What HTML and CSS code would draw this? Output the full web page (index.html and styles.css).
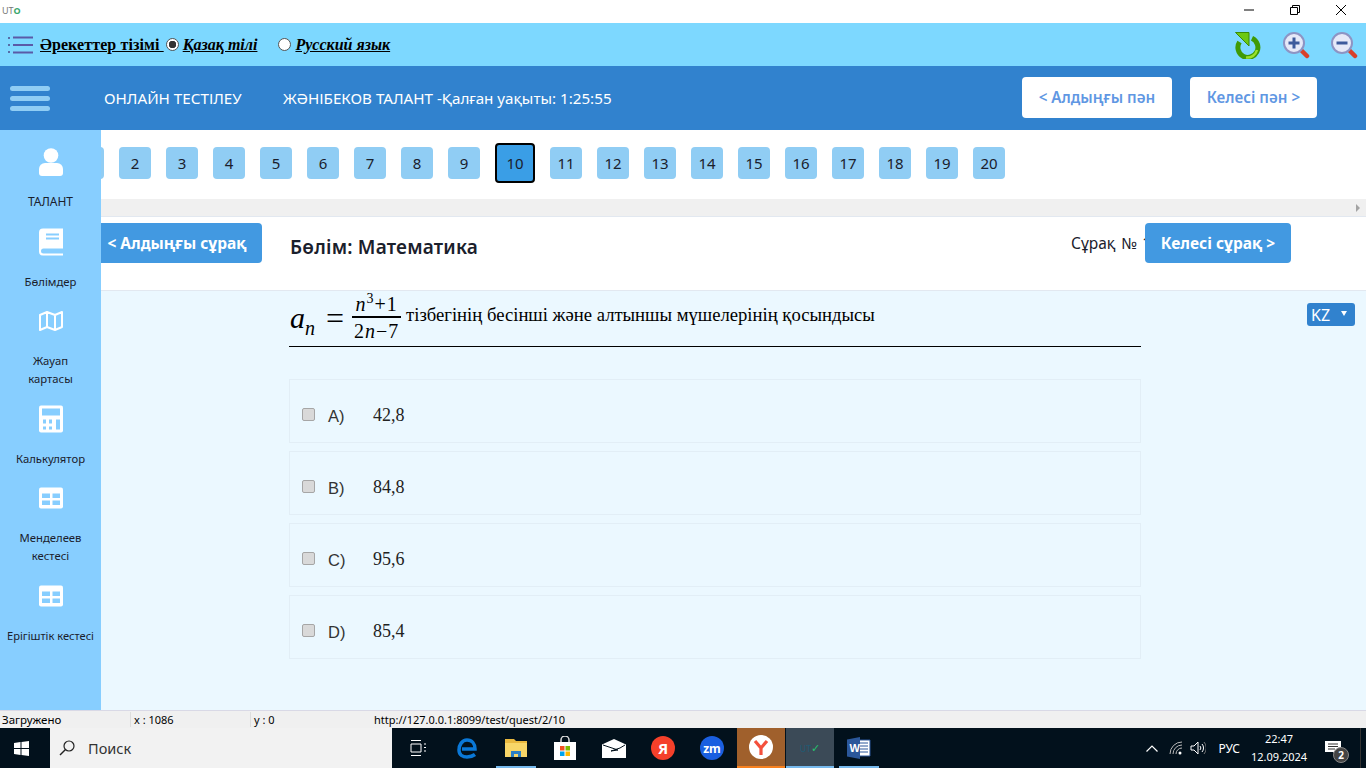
FILE: index.html
```html
<!DOCTYPE html>
<html lang="kk">
<head>
  <meta charset="UTF-8" />
  <meta name="viewport" content="width=device-width, initial-scale=1.0"/>
  <title>Онлайн тестілеу</title>
  <link rel="stylesheet" href="styles.css">
</head>
<body>

  <!-- window title bar -->
  <div class="titlebar">
    <span class="app-logo">UT<span class="app-logo-o">O</span></span>
    <div class="win-controls">
      <svg class="win-btn" viewBox="0 0 12 12"><path d="M1 6h10" stroke="#000" fill="none"/></svg>
      <svg class="win-btn" viewBox="0 0 12 12"><path d="M1.5 3.5h7v7h-7zM3.5 3.5v-2h7v7h-2" stroke="#000" fill="none"/></svg>
      <svg class="win-btn" viewBox="0 0 12 12"><path d="M1 1l10 10M11 1L1 11" stroke="#000" fill="none"/></svg>
    </div>
  </div>

  <!-- toolbar -->
  <div class="toolbar">
    <svg class="list-icon" viewBox="0 0 26 18">
      <path d="M1 2h2M1 9h2M1 16h2" stroke="#4a4a8a" stroke-width="1.5"/>
      <path d="M6 1.5h20M6 9h20M6 16.5h20" stroke="#5a5aa8" stroke-width="2"/>
    </svg>
    <a class="tool-link tool-title">Әрекеттер тізімі&nbsp;</a>
    <span class="radio radio-on"></span>
    <a class="tool-link tool-lang lang-kz">Қазақ тілі</a>
    <span class="radio"></span>
    <a class="tool-link tool-lang">Русский язык</a>

    <div class="tool-icons">
      <svg class="tool-icon" viewBox="0 0 28 28">
        <path d="M18 7.300A10 10 0 1 1 5.500 11" fill="none" stroke="#3f9a05" stroke-width="5"/>
        <path d="M23 19a10 10 0 0 1-11 7.500" fill="none" stroke="#9be02c" stroke-width="2.500"/>
        <path d="M1.500 1.500H15V15z" fill="#6cc814" stroke="#3a8c06"/>
      </svg>
      <svg class="tool-icon" viewBox="0 0 28 28">
        <path d="M18 18l7 7" stroke="#d8402a" stroke-width="4.500" stroke-linecap="round"/>
        <circle cx="12" cy="12" r="10" fill="#e6e9f8" stroke="#8d94c4" stroke-width="2"/>
        <path d="M6.500 12h11M12 6.500v11" stroke="#3d5a9c" stroke-width="3"/>
      </svg>
      <svg class="tool-icon" viewBox="0 0 28 28">
        <path d="M18 18l7 7" stroke="#d8402a" stroke-width="4.500" stroke-linecap="round"/>
        <circle cx="12" cy="12" r="10" fill="#e6e9f8" stroke="#8d94c4" stroke-width="2"/>
        <path d="M6.500 12h11" stroke="#3d5a9c" stroke-width="3"/>
      </svg>
    </div>
  </div>

  <!-- blue header -->
  <header class="header">
    <div class="burger"><span></span><span></span><span></span></div>
    <span class="header-title">ОНЛАЙН ТЕСТІЛЕУ</span>
    <span class="header-user">ЖӘНІБЕКОВ ТАЛАНТ -Қалған уақыты: 1:25:55</span>
    <button class="subject-btn subject-prev">&lt; Алдыңғы пән</button>
    <button class="subject-btn subject-next">Келесі пән &gt;</button>
  </header>

  <div class="body-row">
    <aside class="sidebar">
      <div class="side-item">
        <svg class="side-icon" viewBox="0 0 24 28"><circle cx="12" cy="7.500" r="7.300" fill="#fff"/><path d="M0 25v-4a6 6 0 0 1 6-6h12a6 6 0 0 1 6 6v4a3 3 0 0 1-3 3H3a3 3 0 0 1-3-3z" fill="#fff"/></svg>
        <span class="side-label side-upper">ТАЛАНТ</span>
      </div>
      <div class="side-item">
        <svg class="side-icon" viewBox="0 0 24 27"><path d="M4 0h20v20H4.500a2.500 2.500 0 0 0 0 5H24v2H4a4 4 0 0 1-4-4V4a4 4 0 0 1 4-4z" fill="#fff"/><path d="M7 6h13M7 10h13" stroke="#87ceff" stroke-width="2"/></svg>
        <span class="side-label">Бөлімдер</span>
      </div>
      <div class="side-item">
        <svg class="side-icon" viewBox="0 0 24 20"><path d="M1 4l7-3 8 3 7-3v15l-7 3-8-3-7 3zM8 1v15M16 4v15" fill="none" stroke="#fff" stroke-width="2" stroke-linejoin="round"/></svg>
        <span class="side-label">Жауап картасы</span>
      </div>
      <div class="side-item">
        <svg class="side-icon" viewBox="0 0 24 27"><rect width="24" height="27" rx="2" fill="#fff"/><path d="M3 3h18v7H3zM4 14h3v4H4zM10 14h3v4h-3zM4 21h3v3H4zM10 21h3v3h-3zM17 14h4v10h-4z" fill="#87ceff"/></svg>
        <span class="side-label">Калькулятор</span>
      </div>
      <div class="side-item">
        <svg class="side-icon" viewBox="0 0 24 21"><rect width="24" height="21" rx="2" fill="#fff"/><path d="M3 6h8v4.500H3zM13.500 6H21v4.500h-7.500zM3 13h8v4.500H3zM13.500 13H21v4.500h-7.500z" fill="#87ceff"/></svg>
        <span class="side-label">Менделеев кестесі</span>
      </div>
      <div class="side-item">
        <svg class="side-icon" viewBox="0 0 24 21"><rect width="24" height="21" rx="2" fill="#fff"/><path d="M3 6h8v4.500H3zM13.500 6H21v4.500h-7.500zM3 13h8v4.500H3zM13.500 13H21v4.500h-7.500z" fill="#87ceff"/></svg>
        <span class="side-label side-wide">Ерігіштік кестесі</span>
      </div>
    </aside>

    <main class="main">
      <div class="pages">
        <a class="page">1</a>
        <a class="page">2</a>
        <a class="page">3</a>
        <a class="page">4</a>
        <a class="page">5</a>
        <a class="page">6</a>
        <a class="page">7</a>
        <a class="page">8</a>
        <a class="page">9</a>
        <a class="page page-active">10</a>
        <a class="page">11</a>
        <a class="page">12</a>
        <a class="page">13</a>
        <a class="page">14</a>
        <a class="page">15</a>
        <a class="page">16</a>
        <a class="page">17</a>
        <a class="page">18</a>
        <a class="page">19</a>
        <a class="page">20</a>
      </div>
      <div class="hscroll"><span class="hscroll-arrow"></span></div>

      <div class="quest-head">
        <button class="quest-btn quest-prev">&lt; Алдыңғы сұрақ</button>
        <span class="section-name">Бөлім: Математика</span>
        <span class="quest-no">Сұрақ № 10</span>
        <button class="quest-btn quest-next">Келесі сұрақ &gt;</button>
      </div>

      <div class="quest-body">
        <div class="quest-col">
          <div class="quest-text">
            <span class="formula">
              <i class="f-a">a<sub>n</sub></i>
              <span class="f-eq">=</span>
              <span class="frac">
                <span class="frac-top"><i>n</i><sup>3</sup>+1</span>
                <span class="frac-bot">2<i>n</i>−7</span>
              </span>
            </span>
            <span class="quest-words">тізбегінің бесінші және алтыншы мүшелерінің қосындысы</span>
          </div>

          <label class="option"><input type="checkbox"><span class="opt-key">A)</span><span class="opt-val">42,8</span></label>
          <label class="option"><input type="checkbox"><span class="opt-key">B)</span><span class="opt-val">84,8</span></label>
          <label class="option"><input type="checkbox"><span class="opt-key">C)</span><span class="opt-val">95,6</span></label>
          <label class="option"><input type="checkbox"><span class="opt-key">D)</span><span class="opt-val">85,4</span></label>
        </div>
        <div class="lang-select">KZ<span class="lang-caret"></span></div>
      </div>
    </main>
  </div>

  <!-- status bar -->
  <div class="statusbar">
    <span class="st-cell st-state">Загружено</span>
    <span class="st-cell st-x">x : 1086</span>
    <span class="st-cell st-y">y : 0</span>
    <span class="st-cell st-url">http://127.0.0.1:8099/test/quest/2/10</span>
  </div>

  <!-- windows taskbar -->
  <div class="taskbar">
    <div class="start">
      <svg width="15" height="15" viewBox="0 0 15 15"><path d="M0 2l6.500-1v6H0zM7.500 1L15 0v7H7.500zM0 8h6.500v6L0 13zM7.500 8H15v7l-7.500-1z" fill="#fff"/></svg>
    </div>
    <div class="search">
      <svg width="16" height="16" viewBox="0 0 16 16"><circle cx="10" cy="6" r="5" fill="none" stroke="#222" stroke-width="1.200"/><path d="M6.500 9.500L1 15" stroke="#222" stroke-width="1.400"/></svg>
      <span>Поиск</span>
    </div>
    <div class="apps">
      <div class="app">
        <svg width="16" height="16" viewBox="0 0 16 16"><path d="M1 .5h10M1 15.500h10M1 4h10v8H1zM14 4h2M14 7.500h2M14 11h2" fill="none" stroke="#fff"/></svg>
      </div>
      <div class="app">
        <svg width="22" height="22" viewBox="0 0 22 22"><path d="M6 12h13c0-5-3-9-8-9-5 0-8 5-8 10 0 5 4 7 8 7 3 0 6-1 8-2.500" fill="none" stroke="#0a78d7" stroke-width="3.500"/></svg>
      </div>
      <div class="app app-open">
        <svg width="24" height="20" viewBox="0 0 24 20"><path d="M1 1h9l2 2h11v16H1z" fill="#eab93f"/><path d="M1 5h22v14H1z" fill="#f8d668"/><path d="M7 19v-6h10v6h-3v-3h-4v3z" fill="#2b7fc4"/></svg>
      </div>
      <div class="app">
        <svg width="22" height="24" viewBox="0 0 22 24"><path d="M7 7V4a4 4 0 0 1 8 0v3" fill="none" stroke="#ddd" stroke-width="1.500"/><path d="M0 6h22v18H0z" fill="#fff"/><path d="M6 10h4.500v4.500H6z" fill="#f25022"/><path d="M11.500 10H16v4.500h-4.500z" fill="#7fba00"/><path d="M6 15.500h4.500V20H6z" fill="#00a4ef"/><path d="M11.500 15.500H16V20h-4.500z" fill="#ffb900"/></svg>
      </div>
      <div class="app">
        <svg width="24" height="19" viewBox="0 0 24 19"><path d="M0 5.500L12 0l12 5.500V19H0z" fill="#fff"/><path d="M1 6l15 5-7 1 9-3 5-3" fill="none" stroke="#02111c"/></svg>
      </div>
      <div class="app"><span class="round-app ya">Я</span></div>
      <div class="app"><span class="round-app zm">zm</span></div>
      <div class="app app-browser">
        <svg width="24" height="24" viewBox="0 0 24 24"><circle cx="12" cy="12" r="12" fill="#fff"/><path d="M6 6l6 7 6-7M12 13v7" fill="none" stroke="#f4503c" stroke-width="3.200"/></svg>
      </div>
      <div class="app app-uto">
        <span class="uto-mark">UT<span class="uto-check">✓</span></span>
      </div>
      <div class="app app-open">
        <svg width="24" height="22" viewBox="0 0 24 22"><path d="M10 3h13v16H10z" fill="#fff" stroke="#2b579a"/><path d="M13 6h8M13 9h8M13 12h8M13 15h8" stroke="#2b579a"/><path d="M0 2.500L13 0v22L0 19.500z" fill="#2b579a"/><text x="2.500" y="15" class="word-w">W</text></svg>
      </div>
    </div>

    <div class="tray">
      <svg class="tray-chevron" width="12" height="7" viewBox="0 0 12 7"><path d="M.5 6.500L6 1l5.500 5.500" fill="none" stroke="#fff" stroke-width="1.200"/></svg>
      <svg class="tray-wifi" width="14" height="14" viewBox="0 0 14 14"><path d="M1 13A12 12 0 0 1 13 1M4 13a9 9 0 0 1 9-9M7 13a6 6 0 0 1 6-6" fill="none" stroke="#bbb"/><circle cx="11" cy="12" r="1.500" fill="#fff"/></svg>
      <svg class="tray-sound" width="16" height="14" viewBox="0 0 16 14"><path d="M1 5h3l4-4v12l-4-4H1z" fill="none" stroke="#fff"/><path d="M10 5a3 3 0 0 1 0 4M12 3a6 6 0 0 1 0 8" fill="none" stroke="#fff"/><path d="M14 1a9 9 0 0 1 0 12" fill="none" stroke="#777"/></svg>
      <span class="tray-lang">РУС</span>
      <span class="tray-clock">22:47<br>12.09.2024</span>
      <span class="tray-note">
        <svg width="16" height="15" viewBox="0 0 16 15"><path d="M0 0h16v11h-3l-1 4-4-4H0z" fill="#fff"/><path d="M3 3h10M3 5.500h10M3 8h7" stroke="#333"/></svg>
        <span class="note-badge">2</span>
      </span>
    </div>
  </div>

</body>
</html>
```

FILE: styles.css
```css
* {
  margin: 0;
  padding: 0;
  box-sizing: border-box;
}

html, body {
  height: 100%;
  overflow: hidden;
}

body {
  display: flex;
  flex-direction: column;
  font-family: "Noto Sans", sans-serif;
  color: #1a202c;
  background-color: #fff;
}

/* title bar */
.titlebar {
  height: 23px;
  display: flex;
  align-items: center;
  justify-content: space-between;
  padding-bottom: 3px;
  background-color: #fff;
}

.app-logo {
  margin-left: 2px;
  font-size: 9px;
  color: #777;
}

.app-logo-o {
  color: #3aa76d;
  font-weight: 700;
}

.win-controls {
  display: flex;
  margin-right: 19px;
  gap: 34px;
}

.win-btn {
  width: 12px;
  height: 12px;
}

/* toolbar */
.toolbar {
  height: 43px;
  display: flex;
  align-items: center;
  padding-left: 7px;
  background-color: #7dd8ff;
}

.list-icon {
  width: 26px;
  height: 18px;
  margin-right: 7px;
}

.tool-link {
  font-family: "Liberation Serif", serif;
  font-size: 16px;
  font-weight: 700;
  color: #000;
  text-decoration: underline;
}

.tool-lang {
  font-style: italic;
}

.lang-kz {
  margin-right: 21px;
}

.tool-title {
  margin-right: 2px;
  letter-spacing: .1px;
}

.radio {
  width: 13px;
  height: 13px;
  margin-right: 4px;
  border: 1px solid #555;
  border-radius: 50%;
  background-color: #fff;
}

.radio-on {
  background: radial-gradient(circle, #333 0 3.500px, #fff 4px);
}

.tool-icons {
  display: flex;
  gap: 20px;
  margin-left: auto;
  margin-right: 8px;
}

.tool-icon {
  width: 28px;
  height: 28px;
}

/* header */
.header {
  height: 64px;
  display: flex;
  align-items: center;
  padding-left: 10px;
  color: #fff;
  background-color: #3182ce;
}

.burger {
  width: 40px;
  display: flex;
  flex-direction: column;
  gap: 5px;
  margin-right: 54px;
}

.burger span {
  height: 5px;
  border-radius: 3px;
  background-color: #90cdf4;
}

.header-title {
  width: 179px;
  font-size: 15.200px;
}

.header-user {
  font-size: 15.200px;
}

.subject-btn {
  height: 41px;
  margin-bottom: 2px;
  font-family: "Noto Sans", sans-serif;
  font-size: 15.200px;
  font-weight: 600;
  color: #5f97e3;
  background-color: #fff;
  border: none;
  border-radius: 4px;
}

.subject-prev {
  width: 150px;
  margin-left: auto;
}

.subject-next {
  width: 127px;
  margin-left: 18px;
  margin-right: 49px;
}

/* page body */
.body-row {
  flex: 1;
  min-height: 0;
  display: flex;
}

.sidebar {
  width: 101px;
  flex-shrink: 0;
  padding-top: 18px;
  display: flex;
  flex-direction: column;
  gap: 16.500px;
  background-color: #87ceff;
}

.side-item {
  display: flex;
  flex-direction: column;
  align-items: center;
  text-align: center;
  gap: 17px;
}

.side-icon {
  width: 24px;
  height: 28px;
}

.side-label {
  padding: 0 14px;
  font-size: 11.300px;
  line-height: 18px;
}

.side-upper {
  font-size: 12px;
}

.side-wide {
  padding: 0;
  font-size: 11.100px;
  white-space: nowrap;
}

.main {
  flex: 1;
  min-width: 0;
  display: flex;
  flex-direction: column;
  overflow: hidden;
}

/* question numbers */
.pages {
  height: 69px;
  display: flex;
  align-items: center;
  gap: 15px;
  margin-left: -29px;
  padding-bottom: 3px;
  background-color: #fff;
}

.page {
  width: 32px;
  height: 32px;
  flex-shrink: 0;
  display: flex;
  align-items: center;
  justify-content: center;
  font-size: 15px;
  border-radius: 4px;
  background-color: #90cdf4;
}

.page-active {
  width: 40px;
  height: 40px;
  border: 2px solid #000;
  background-color: #3a9ee6;
}

.hscroll {
  height: 17px;
  display: flex;
  align-items: center;
  justify-content: flex-end;
  padding-right: 6px;
  background-color: #f0f0f0;
}

.hscroll-arrow {
  border-left: 4px solid #a3a3a3;
  border-top: 4px solid transparent;
  border-bottom: 4px solid transparent;
}

/* question head */
.quest-head {
  height: 75px;
  display: flex;
  align-items: flex-start;
  padding-top: 6px;
  background-color: #fff;
  border-top: 1px solid #e2e8f0;
  border-bottom: 1px solid #e2e8f0;
}

.quest-btn {
  width: 161px;
  height: 40px;
  flex-shrink: 0;
  font-family: "Noto Sans", sans-serif;
  font-size: 15.500px;
  font-weight: 700;
  color: #fff;
  background-color: #4299e1;
  border: none;
  border-radius: 0 4px 4px 0;
}

.quest-prev {
  padding-right: 9px;
}

.quest-next {
  width: 146px;
  margin-right: 75px;
  border-radius: 4px;
}

.section-name {
  flex: 1;
  margin-left: 28px;
  padding-top: 11px;
  font-size: 19px;
  font-weight: 600;
  letter-spacing: .2px;
}

.quest-no {
  width: 74px;
  padding-top: 9px;
  overflow: hidden;
  white-space: nowrap;
  font-size: 15.500px;
  word-spacing: 1.500px;
}

/* question body */
.quest-body {
  flex: 1;
  display: flex;
  align-items: flex-start;
  padding: 2px 11px 0 188px;
  background-color: #ebf8ff;
}

.quest-col {
  width: 852px;
  display: flex;
  flex-direction: column;
  gap: 8px;
}

.quest-text {
  height: 54px;
  margin-bottom: 24px;
  display: flex;
  align-items: flex-start;
  gap: 5px;
  font-family: "Liberation Serif", serif;
  font-size: 18.670px;
  color: #000;
  border-bottom: 1px solid #000;
}

.quest-words {
  margin-top: 11px;
}

.formula {
  display: flex;
  align-items: center;
  padding-left: 1px;
}

.f-a {
  font-size: 30px;
  line-height: 1;
}

.f-a sub {
  font-size: 20px;
  line-height: 0;
}

.f-eq {
  margin: 0 8px 0 11px;
  font-size: 32px;
  line-height: 1;
}

.frac {
  width: 49px;
  display: flex;
  flex-direction: column;
  align-items: center;
  font-size: 20px;
  line-height: 23px;
  letter-spacing: 1px;
  white-space: nowrap;
}

.frac-top {
  width: 100%;
  text-align: center;
  border-bottom: 2px solid #000;
}

.frac-top sup {
  font-size: 14px;
  line-height: 0;
}

.frac-bot {
  padding-top: 2px;
}

.option {
  height: 64px;
  display: flex;
  align-items: center;
  padding-left: 12px;
  padding-top: 7px;
  border: 1px solid #e2eef6;
}

.option input {
  appearance: none;
  width: 13px;
  height: 13px;
  background-color: #d9d9d9;
  border: 1px solid #a6a6a6;
  border-radius: 2px;
}

.opt-key {
  width: 45px;
  margin-left: 13px;
  padding-top: 3px;
  font-family: "Liberation Sans", sans-serif;
  font-size: 16.500px;
  color: #333;
}

.opt-val {
  padding-top: 1px;
  font-family: "Liberation Serif", serif;
  font-size: 18px;
  color: #222;
}

.lang-select {
  width: 48px;
  height: 23px;
  margin-top: 10px;
  margin-left: auto;
  display: flex;
  align-items: center;
  justify-content: space-between;
  padding: 0 8px 0 4px;
  font-size: 16px;
  color: #fff;
  background-color: #3182ce;
  border-radius: 3px;
}

.lang-caret {
  margin-top: -3px;
  border-top: 5px solid #fff;
  border-left: 3px solid transparent;
  border-right: 3px solid transparent;
}

/* status bar */
.statusbar {
  height: 18px;
  display: flex;
  align-items: center;
  font-size: 11px;
  color: #000;
  background-color: #f0f0f0;
  border-top: 1px solid #d9d9e6;
}

.st-cell {
  padding-left: 2px;
}

.st-state {
  width: 130px;
  font-size: 11.500px;
}

.st-x {
  width: 120px;
  padding-left: 3px;
  border-left: 1px solid #ddd;
}

.st-y {
  width: 120px;
  padding-left: 3px;
  border-left: 1px solid #ddd;
}

.st-url {
  padding-left: 4px;
}

/* taskbar */
.taskbar {
  height: 40px;
  display: flex;
  color: #fff;
  background-color: #02111c;
}

.start {
  width: 50px;
  display: flex;
  align-items: center;
  justify-content: center;
  padding-right: 8px;
}

.search {
  width: 342px;
  display: flex;
  align-items: center;
  gap: 13px;
  padding-left: 9px;
  font-size: 14.500px;
  color: #333;
  background-color: #f2f2f2;
}

.apps {
  display: flex;
  gap: 1px;
  padding-left: 2px;
}

.app {
  width: 48px;
  display: flex;
  align-items: center;
  justify-content: center;
}

.app-open {
  position: relative;
}

.app-open::after {
  content: "";
  position: absolute;
  left: 4px;
  right: 4px;
  bottom: 0;
  height: 2px;
  background-color: #76b9ed;
}

.app-browser {
  background-color: #a0602c;
  border-bottom: 2px solid #f7801e;
}

.app-uto {
  background-color: #3b4a57;
  border-bottom: 2px solid #76b9ed;
}

.uto-mark {
  font-size: 9px;
  color: #1f5a73;
}

.uto-check {
  color: #25c26e;
  font-size: 11px;
}

.round-app {
  width: 24px;
  height: 24px;
  display: flex;
  align-items: center;
  justify-content: center;
  border-radius: 50%;
  font-weight: 700;
  color: #fff;
}

.ya {
  font-size: 15px;
  background-color: #f5402a;
}

.zm {
  font-size: 12px;
  background-color: #1a5fe0;
}

.word-w {
  font-family: "Liberation Sans", sans-serif;
  font-size: 11px;
  font-weight: 700;
  fill: #fff;
}

.tray {
  margin-left: auto;
  display: flex;
  align-items: center;
  padding-right: 5px;
  font-size: 12px;
}

.tray-chevron {
  margin-right: 11px;
}

.tray-wifi {
  margin-right: 7px;
}

.tray-sound {
  margin-right: 12px;
}

.tray-lang {
  margin-right: 9px;
}

.tray-clock {
  width: 60px;
  font-size: 11px;
  line-height: 18px;
  text-align: center;
}

.tray-note {
  position: relative;
  width: 52px;
  height: 40px;
  display: flex;
  align-items: center;
  justify-content: center;
  padding-right: 4px;
  border-right: 1px solid #333;
}

.note-badge {
  position: absolute;
  left: 24px;
  top: 19px;
  width: 16px;
  height: 16px;
  display: flex;
  align-items: center;
  justify-content: center;
  font-size: 10px;
  font-weight: 700;
  border-radius: 50%;
  background-color: #444;
  border: 1px solid #888;
}
```
